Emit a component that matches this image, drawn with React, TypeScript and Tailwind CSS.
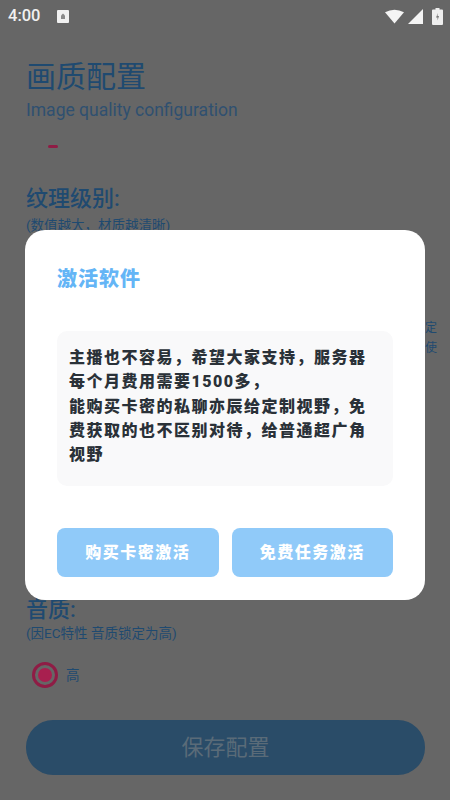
const cjk = "font-['Roboto','Noto_Sans_CJK_SC',sans-serif]";

function Radio() {
  return (
    <span className="flex h-[26px] w-[26px] items-center justify-center rounded-full border-[3px] border-[#8f1c45]">
      <span className="h-[14px] w-[14px] rounded-full bg-[#a81f4f]" />
    </span>
  );
}

function StatusBar() {
  return (
    <div className="flex h-[30px] items-center justify-between pl-[8px] pr-[7px] pt-[2px] text-[#f0f0f0]">
      <div className="flex items-center gap-[17px]">
        <span className="text-[16.5px] font-medium leading-none">4:00</span>
        <svg width="12" height="13" viewBox="0 0 12 13">
          <rect width="12" height="13" rx="1" fill="#f0f0f0" />
          <path d="M4 9V5.5L6 3.5L8 5.5V9Z" fill="#8a8a8a" />
        </svg>
      </div>
      <div className="flex items-center gap-[4px]">
        <svg width="19" height="15" viewBox="0 0 19 15">
          <path d="M0 3.2Q9.5 -1.8 19 3.2L9.5 14.5Z" fill="#f4f4f4" />
        </svg>
        <svg width="15" height="15" viewBox="0 0 15 15">
          <path d="M15 0V15H0Z" fill="#f4f4f4" />
        </svg>
        <svg className="ml-[5px]" width="11" height="17" viewBox="0 0 11 17">
          <path d="M3.5 0H7.5V1.5H10Q11 1.5 11 2.5V16Q11 17 10 17H1Q0 17 0 16V2.5Q0 1.5 1 1.5H3.5Z" fill="#eeeeee" />
          <path d="M6 5L4 9.5H5.5V12.5L7 8H5.5Z" fill="#777777" />
        </svg>
      </div>
    </div>
  );
}

export default function App() {
  return (
    <div className={`relative h-[800px] w-[450px] overflow-hidden bg-[#666666] ${cjk}`}>
      <StatusBar />
      <div className="flex flex-col pl-[26px] pr-[25px] text-[#1f4a70]">
        <h1 className="mt-[26px] text-[30px] leading-[42px]">画质配置</h1>
        <p className="mt-[2px] text-[17.5px] leading-[20px] text-[#2f5070]">Image quality configuration</p>
        <div className="ml-[22px] mt-[25px] h-[3px] w-[10px] rounded-full bg-[#8f1c45]" />
        <h2 className="mt-[36px] text-[22px] font-medium leading-[30px]">纹理级别:</h2>
        <p className="mt-[3px] text-[13.5px] leading-[16px]">(数值越大，材质越清晰)</p>
        <p className="mt-[85px] self-end text-right text-[12px] leading-[20px] -mr-[12px]">定<br />使</p>
        <h2 className="mt-[237px] text-[22px] font-medium leading-[30px]">音质:</h2>
        <p className="text-[13.5px] leading-[16px]">(因EC特性 音质锁定为高)</p>
        <div className="ml-[6px] mt-[21px] flex items-center gap-[8px]">
          <Radio />
          <span className="text-[13.5px]">高</span>
        </div>
        <button className="mt-[32px] flex h-[55px] items-center justify-center rounded-[27px] bg-[#2a4c68] text-[22px] text-[#5a6b78]">
          保存配置
        </button>
      </div>

      <div className="absolute left-[25px] top-[230px] flex h-[370px] w-[400px] flex-col rounded-[20px] bg-white px-[32px]">
        <h3 className="mt-[33px] text-[20px] font-black leading-[32px] tracking-[1px] text-[#64b5f6]">激活软件</h3>
        <div className="mt-[36px] h-[155px] rounded-[10px] bg-[#f9f9fa] px-[12px] pt-[15px] text-[16px] font-black leading-[24.3px] tracking-[1.5px] text-[#2a3138]">
          主播也不容易，希望大家支持，服务器每个月费用需要1500多，<br />
          能购买卡密的私聊亦辰给定制视野，免费获取的也不区别对待，给普通超广角视野
        </div>
        <div className="mt-[42px] flex gap-[13px]">
          <button className="h-[49px] flex-1 rounded-[8px] bg-[#90caf9] text-[16px] font-black tracking-[1.5px] text-white">购买卡密激活</button>
          <button className="h-[49px] flex-1 rounded-[8px] bg-[#90caf9] text-[16px] font-black tracking-[1.5px] text-white">免费任务激活</button>
        </div>
      </div>
    </div>
  );
}
